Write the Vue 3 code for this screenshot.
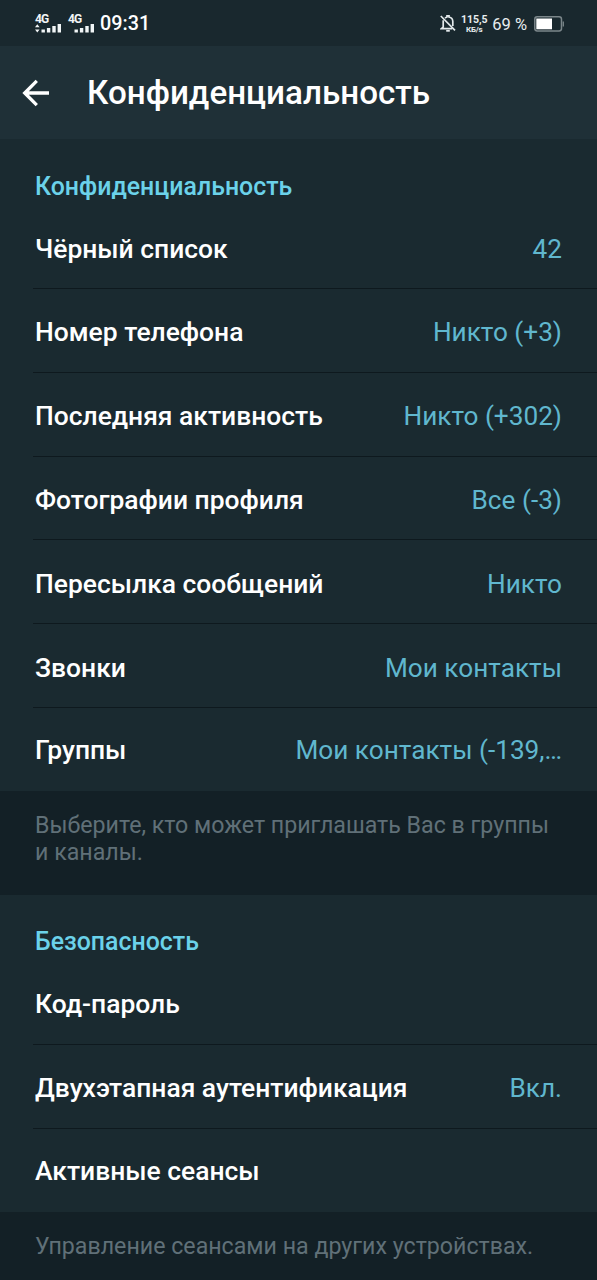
<script setup>
const privacy = [
  { label: 'Чёрный список', value: '42' },
  { label: 'Номер телефона', value: 'Никто (+3)' },
  { label: 'Последняя активность', value: 'Никто (+302)' },
  { label: 'Фотографии профиля', value: 'Все (-3)' },
  { label: 'Пересылка сообщений', value: 'Никто' },
  { label: 'Звонки', value: 'Мои контакты' },
  { label: 'Группы', value: 'Мои контакты (-139,…' },
]
const security = [
  { label: 'Код-пароль', value: '' },
  { label: 'Двухэтапная аутентификация', value: 'Вкл.' },
  { label: 'Активные сеансы', value: '' },
]
</script>

<template>
  <div class="screen">
    <div class="status">
      <div class="status-left">
        <div class="signal">
          <span class="net">4G</span>
          <svg width="27" height="9" viewBox="0 0 27 9" fill="#f1f5f6">
            <path d="M0 3.3 2.3 0.2 4.6 3.3ZM0 5.4h4.6L2.3 8.6Z" />
            <path d="M6.5 5.6h3.4v2.900H6.500zM11.900 4h3.400v4.500H11.900zM17.300 1.900h3.400v6.600h-3.400zM22.600 0H26v8.500h-3.400z" />
          </svg>
        </div>
        <div class="signal second">
          <span class="net">4G</span>
          <svg width="27" height="9" viewBox="0 0 27 9" fill="#f1f5f6">
            <path d="M6.500 5.600h3.400v2.900H6.500zM11.900 4h3.400v4.500H11.900zM17.300 1.900h3.400v6.600h-3.400zM22.600 0H26v8.500h-3.400z" />
          </svg>
        </div>
        <span class="clock">09:31</span>
      </div>
      <div class="status-right">
        <svg class="bell" width="16" height="18" viewBox="0 0 16 18" fill="none" stroke="#e4eaec" stroke-width="1.7">
          <path d="M3.2 5.2V12L1.5 13.6H12.2M5 3.1C6 2.3 6.8 2.3 7 2V.8h2V2c2.4.5 3.8 2.300 3.800 4.600V11" />
          <path d="M.8 1 15 15.400" />
          <path d="M6.200 15.800H9.800" stroke-width="1.800" />
        </svg>
        <div class="speed"><span class="rate">115,5</span><span class="unit">КБ/s</span></div>
        <span class="percent">69 %</span>
        <svg class="battery" width="31" height="16" viewBox="0 0 31 16">
          <rect x=".8" y=".8" width="26.700" height="14.200" rx="2.400" fill="none" stroke="#7b868a" stroke-width="1.500" />
          <rect x="2.300" y="2.500" width="15.700" height="10.800" fill="#fff" />
          <path d="M29.300 5.500v5" stroke="#7b868a" stroke-width="1.300" />
        </svg>
      </div>
    </div>

    <header class="bar">
      <svg class="back" width="28" height="28" viewBox="0 0 28 28" fill="none" stroke="#fff" stroke-width="3.300">
        <path d="M27 14H3M14.800 1.900 2.700 14l12.100 12.100" />
      </svg>
      <h1>Конфиденциальность</h1>
    </header>

    <section class="group">
      <h2>Конфиденциальность</h2>
      <div v-for="row in privacy" :key="row.label" class="row">
        <span class="label">{{ row.label }}</span>
        <span class="value">{{ row.value }}</span>
      </div>
    </section>
    <p class="note first-note">Выберите, кто может приглашать Вас в группы<br />и каналы.</p>

    <section class="group security">
      <h2>Безопасность</h2>
      <div v-for="row in security" :key="row.label" class="row">
        <span class="label">{{ row.label }}</span>
        <span class="value">{{ row.value }}</span>
      </div>
    </section>
    <p class="note">Управление сеансами на других устройствах.</p>
  </div>
</template>

<style>
body {
  margin: 0;
  background: #132026;
}
</style>

<style scoped>
.screen {
  width: 597px;
  height: 1280px;
  overflow: hidden;
  background: #132026;
  font-family: Roboto, "Noto Sans", sans-serif;
  color: #fff;
}
.status {
  height: 46px;
  box-sizing: border-box;
  padding: 0 32px 0 35px;
  display: flex;
  justify-content: space-between;
  align-items: center;
  background: #19282e;
}
.status-left,
.status-right {
  display: flex;
  align-items: center;
  height: 46px;
}
.status-right {
  padding-top: 2px;
  box-sizing: border-box;
}
.signal {
  display: flex;
  flex-direction: column;
  width: 27px;
  height: 18px;
  padding-top: 1px;
  color: #f1f5f6;
}
.signal svg {
  display: block;
}
.second {
  margin-left: 6px;
}
.net {
  font-size: 12px;
  line-height: 9px;
  font-weight: 700;
  letter-spacing: -0.8px;
}
.clock {
  margin-left: 5px;
  font-size: 19.8px;
  font-weight: 500;
  line-height: 46px;
  padding-top: 1px;
}
.speed {
  display: flex;
  flex-direction: column;
  align-items: center;
  width: 26px;
  margin-left: 5px;
  font-weight: 700;
  color: #e8edef;
}
.rate {
  font-size: 10.5px;
  line-height: 10px;
}
.unit {
  font-size: 8px;
  line-height: 9px;
  letter-spacing: -0.2px;
}
.percent {
  margin-left: 5px;
  font-size: 16.5px;
  color: #e8edef;
  white-space: nowrap;
}
.battery {
  margin-left: 7px;
}
.bar {
  height: 93px;
  box-sizing: border-box;
  padding: 1px 22px 0;
  display: flex;
  align-items: center;
  background: #1f3037;
}
.back {
  flex: none;
}
h1 {
  margin: 0 0 0 37px;
  font-size: 33.2px;
  line-height: 40px;
  font-weight: 500;
  white-space: nowrap;
}
.group {
  background: #1a2a30;
}
h2 {
  margin: 0;
  height: 66.3px;
  box-sizing: border-box;
  padding: 32.5px 35px 0;
  font-size: 24.9px;
  line-height: 30px;
  font-weight: 500;
  color: #6bd2ea;
}
.row {
  height: 83.8px;
  box-sizing: border-box;
  margin-left: 33px;
  padding: 4px 35px 0 2px;
  display: flex;
  align-items: center;
  justify-content: space-between;
  border-bottom: 1px solid #0e191e;
  font-size: 26.45px;
  line-height: 32px;
  white-space: nowrap;
}
.row:last-child {
  height: 82.8px;
  padding-top: 1px;
  border-bottom: 0;
}
.security .row:not(:last-child) {
  padding-top: 3px;
}
.label {
  font-weight: 500;
}
.value {
  font-size: 26.2px;
  color: #60b7ce;
}
.note {
  margin: 0;
  padding: 21px 35px 0;
  font-size: 23.2px;
  line-height: 27.5px;
  color: #607078;
  white-space: nowrap;
}
.first-note {
  height: 83px;
}
</style>
